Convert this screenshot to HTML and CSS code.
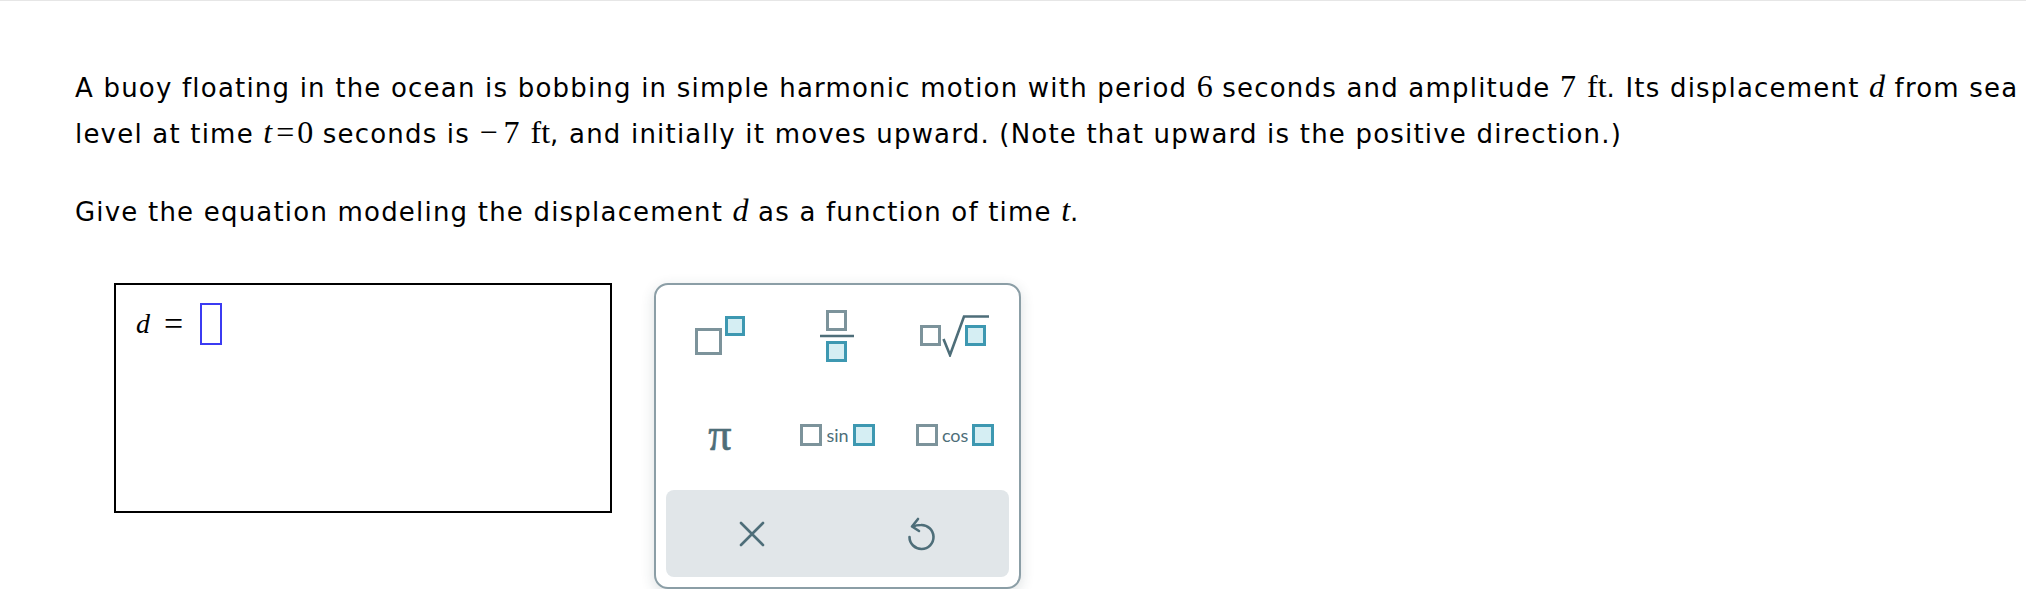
FILE: index.html
```html
<!DOCTYPE html>
<html>
<head>
<meta charset="utf-8">
<link rel="stylesheet" href="styles.css">
</head>
<body>
<div class="page">
  <p class="q">A buoy floating in the ocean is bobbing in simple harmonic motion with period <span class="m">6</span> seconds and amplitude <span class="m">7<span class="sp"></span>ft</span>. Its displacement <span class="m mi">d</span> from sea<br>level at time <span class="m"><span class="mi">t</span><span class="op">=</span>0</span> seconds is <span class="m"><span class="neg">−</span>7<span class="sp"></span>ft</span>, and initially it moves upward. (Note that upward is the positive direction.)</p>
  <p class="q q2">Give the equation modeling the displacement <span class="m mi">d</span> as a function of time <span class="m mi">t</span>.</p>
  <div class="answer">
    <div class="input">
      <span class="var">d</span>
      <span class="eq">=</span>
      <span class="cursor"></span>
    </div>
    <div class="keypad">
      <div class="krow r1">
        <div class="key">
          <svg width="52" height="42" viewBox="0 0 52 42">
            <rect x="2.5" y="14.5" width="24" height="24" class="g"/>
            <rect x="32.5" y="2.5" width="17" height="17" class="t"/>
          </svg>
        </div>
        <div class="key">
          <svg width="34" height="53" viewBox="0 0 34 53">
            <rect x="7.5" y="1.5" width="18" height="18" class="g"/>
            <line x1="0" y1="26" x2="34" y2="26" class="d"/>
            <rect x="7.5" y="32.5" width="18" height="18" class="t"/>
          </svg>
        </div>
        <div class="key">
          <svg width="72" height="42" viewBox="0 0 72 42">
            <rect x="2.5" y="11.5" width="18" height="18" class="g"/>
            <path d="M24.5 24 L31 40 L45 1.5 L70 1.5" class="d"/>
            <rect x="47.5" y="11.5" width="18" height="18" class="t"/>
          </svg>
        </div>
      </div>
      <div class="krow r2">
        <div class="key"><span class="pi">π</span></div>
        <div class="key fn">
          <span class="bx g"></span><span class="fname">sin</span><span class="bx t"></span>
        </div>
        <div class="key fn">
          <span class="bx g"></span><span class="fname">cos</span><span class="bx t"></span>
        </div>
      </div>
      <div class="kbottom">
        <div class="key">
          <svg width="26" height="26" viewBox="0 0 26 26">
            <path d="M2 2 L24 24 M24 2 L2 24" class="ic"/>
          </svg>
        </div>
        <div class="key">
          <svg width="30" height="36" viewBox="0 0 30 36">
            <path d="M10 3 L4 10.5 L11 15" class="ic"/>
            <path d="M5 10.5 C 7 9.5 10 9 13 9 A 12 12 0 1 1 1.5 21" class="ic"/>
          </svg>
        </div>
      </div>
    </div>
  </div>
</div>
</body>
</html>
```

FILE: styles.css
```css
html, body {
  margin: 0;
  padding: 0;
  background: #ffffff;
}

.page {
  border-top: 1px solid #e6e6e6;
  padding: 0 0 0 75px;
  font-family: "DejaVu Sans", Verdana, sans-serif;
  color: #000;
}

.q {
  margin: 64px 0 0 0;
  font-size: 26px;
  letter-spacing: 1.2px;
  line-height: 46px;
  white-space: nowrap;
}

.q2 {
  margin-top: 32px;
}

.m {
  font-family: "Liberation Serif", "Times New Roman", serif;
  font-size: 32px;
  letter-spacing: 0;
  line-height: 0;
}

.mi {
  font-style: italic;
}

.sp {
  display: inline-block;
  width: 11px;
}

.op {
  margin: 0 3px 0 4px;
}

.neg {
  margin-right: 6px;
}

.answer {
  display: flex;
  align-items: flex-start;
  margin: 48px 0 0 39px;
}

.input {
  box-sizing: border-box;
  width: 498px;
  height: 230px;
  border: 2px solid #000;
  display: flex;
  align-items: center;
  align-self: flex-start;
  padding: 18px 0 0 20px;
  align-content: flex-start;
  flex-wrap: wrap;
}

.input > span {
  height: 42px;
  display: flex;
  align-items: center;
}

.var {
  font-family: "Liberation Serif", "Times New Roman", serif;
  font-style: italic;
  font-size: 28px;
}

.eq {
  font-family: "Liberation Serif", "Times New Roman", serif;
  font-size: 34px;
  margin-left: 14px;
}

.cursor {
  box-sizing: border-box;
  width: 22px;
  border: 2px solid #3b3bf2;
  margin-left: 17px;
}

.keypad {
  box-sizing: border-box;
  width: 367px;
  height: 306px;
  margin-left: 42px;
  border: 2px solid #8b9ea6;
  border-radius: 14px;
  padding: 0 10px 10px;
  background: #fff;
  box-shadow: 0 4px 14px rgba(40, 60, 70, 0.16);
  display: flex;
  flex-direction: column;
}

.krow {
  display: grid;
  grid-template-columns: repeat(3, 1fr);
  margin: 0 -5px;
}

.r1 { height: 102px; }
.r2 { height: 96px; }

.key {
  display: flex;
  align-items: center;
  justify-content: center;
}

svg .g, svg .t, svg .d, svg .ic {
  fill: none;
  stroke-width: 3;
}

svg .g { stroke: #7c939b; }
svg .t { stroke: #3d98b1; fill: #d5eef3; }
svg .d { stroke: #4e6e79; stroke-width: 2.6; }
svg .ic { stroke: #4e6e79; stroke-width: 2.6; stroke-linecap: round; stroke-linejoin: round; }

.pi {
  font-family: "Liberation Serif", "Times New Roman", serif;
  font-size: 46px;
  color: #4e6e79;
  line-height: 1;
  -webkit-text-stroke: 0.6px #4e6e79;
}

.fn {
  gap: 4px;
}

.bx {
  box-sizing: border-box;
  width: 22px;
  height: 22px;
  border: 3px solid #7c939b;
}

.bx.t {
  border-color: #3d98b1;
  background: #d5eef3;
}

.fname {
  font-family: Lato, "Open Sans", sans-serif;
  font-size: 18px;
  color: #4e6e79;
  line-height: 22px;
}

.kbottom {
  margin-top: 7px;
  height: 87px;
  background: #e1e6e9;
  border-radius: 8px;
  display: grid;
  grid-template-columns: 1fr 1fr;
}
```
